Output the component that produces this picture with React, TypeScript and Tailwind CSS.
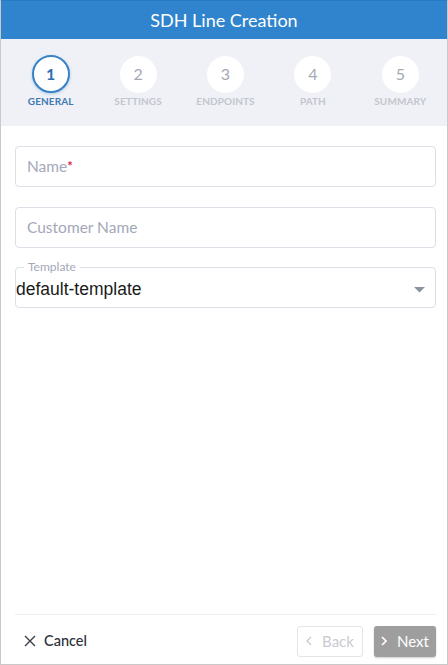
import React from "react";

const steps = [
  { n: "1", label: "GENERAL" },
  { n: "2", label: "SETTINGS" },
  { n: "3", label: "ENDPOINTS" },
  { n: "4", label: "PATH" },
  { n: "5", label: "SUMMARY" },
];

export default function App() {
  return (
    <div
      className="w-[448px] h-[665px] flex flex-col bg-white border-x border-b border-[#c9c9c9] overflow-hidden"
      style={{ fontFamily: "Lato, 'Open Sans', sans-serif" }}
    >
      <div className="h-[39px] shrink-0 bg-[#2f84cd] border-t border-[#2a78bd] flex items-center justify-center">
        <span className="text-white text-[18px] leading-none">SDH Line Creation</span>
      </div>
      <div className="h-[87px] shrink-0 bg-[#eff1f6] pl-[6px] pr-[3px] grid grid-cols-5 pt-[16px]">
        {steps.map((s, i) => (
          <div key={s.n} className="flex flex-col items-center">
            {i === 0 ? (
              <div className="w-[38px] h-[38px] rounded-full bg-white border-2 border-[#3a82c4] flex items-center justify-center text-[#2f6fad] text-[16px] font-bold shadow-[0_1px_3px_rgba(47,132,205,0.35)]">
                {s.n}
              </div>
            ) : (
              <div className="w-[37px] h-[37px] mt-[0.5px] rounded-full bg-white flex items-center justify-center text-[#a5a9b6] text-[16px]">
                {s.n}
              </div>
            )}
            <div
              className={
                "mt-[3px] text-[10px] font-bold leading-none tracking-[0.01em] " +
                (i === 0 ? "text-[#3f79b3]" : "text-[#c3c6cf]")
              }
            >
              {s.label}
            </div>
          </div>
        ))}
      </div>
      <div className="flex-1 flex flex-col pl-[14px] pr-[11px] pt-[20px]">
        <div className="h-[41px] rounded-[4px] border border-[#dcdfe5] flex items-center px-[11px] text-[15.5px] text-[#a3a8b9]">
          Name<span className="text-[#d8264a] text-[13px] self-start mt-[10px] font-bold">*</span>
        </div>
        <div className="h-[41px] mt-[20px] rounded-[4px] border border-[#dcdfe5] flex items-center px-[11px] text-[15.5px] text-[#a3a8b9]">
          Customer Name
        </div>
        <div className="relative h-[41px] mt-[19px] rounded-[4px] border border-[#dcdfe5] flex items-center pl-0 pr-[10px] pt-[3px]">
          <span className="absolute -top-[8px] left-[8px] bg-white px-[4px] text-[12px] leading-[14px] text-[#a3a8b9]">
            Template
          </span>
          <span
            className="flex-1 text-[17.5px] text-[#1a1a1a]"
            style={{ fontFamily: "'Liberation Sans', Arial, sans-serif" }}
          >
            default-template
          </span>
          <svg width="11" height="6" viewBox="0 0 11 6" className="mt-[1px]">
            <path d="M0 0 L11 0 L5.5 5.5 Z" fill="#8d92a0" />
          </svg>
        </div>
        <div className="flex-1" />
        <div className="border-t border-[#eeeff2] h-[50px] pt-[3px] flex items-center">
          <div className="flex items-center ml-[9px] text-[14.5px] text-[#2b2f3a] font-medium">
            <svg width="12" height="12" viewBox="0 0 12 12" className="mr-[8px]">
              <path d="M1 1 L11 11 M11 1 L1 11" stroke="#3a3d46" strokeWidth="1.4" />
            </svg>
            Cancel
          </div>
          <div className="flex-1" />
          <div className="h-[31px] w-[66px] rounded-[3px] border border-[#e3e4e8] flex items-center justify-center text-[15px] text-[#c9cbd1]">
            <svg width="6" height="10" viewBox="0 0 6 10" className="mr-[10px]">
              <path d="M5 1 L1 5 L5 9" stroke="#c9cbd1" strokeWidth="1.4" fill="none" />
            </svg>
            Back
          </div>
          <div className="ml-[11px] h-[31px] w-[62px] rounded-[3px] bg-[#9e9e9e] flex items-center justify-center text-[15px] text-white shadow-[0_1px_2px_rgba(0,0,0,0.2)]">
            <svg width="6" height="10" viewBox="0 0 6 10" className="mr-[10px]">
              <path d="M1 1 L5 5 L1 9" stroke="#ffffff" strokeWidth="1.6" fill="none" />
            </svg>
            Next
          </div>
        </div>
      </div>
    </div>
  );
}
